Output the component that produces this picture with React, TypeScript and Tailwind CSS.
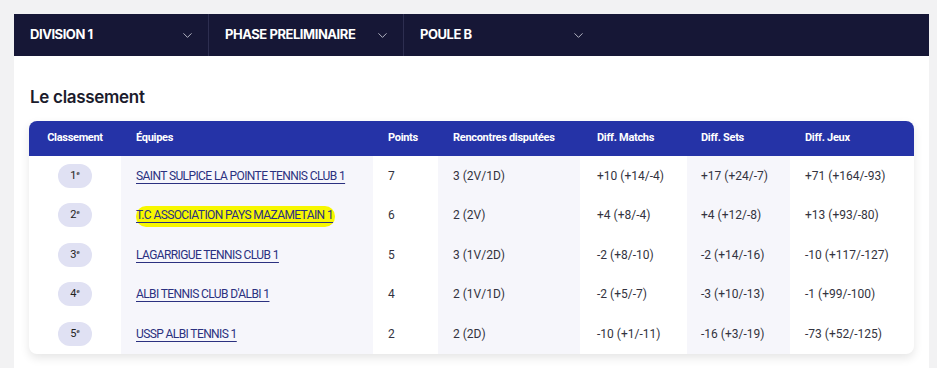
import { ChevronDown } from "lucide-react";

const rows = [
	{ rank: 1, team: "SAINT SULPICE LA POINTE TENNIS CLUB 1", pts: 7, played: "3 (2V/1D)", matchs: "+10 (+14/-4)", sets: "+17 (+24/-7)", jeux: "+71 (+164/-93)" },
	{ rank: 2, team: "T.C ASSOCIATION PAYS MAZAMETAIN 1", pts: 6, played: "2 (2V)", matchs: "+4 (+8/-4)", sets: "+4 (+12/-8)", jeux: "+13 (+93/-80)", mark: true },
	{ rank: 3, team: "LAGARRIGUE TENNIS CLUB 1", pts: 5, played: "3 (1V/2D)", matchs: "-2 (+8/-10)", sets: "-2 (+14/-16)", jeux: "-10 (+117/-127)" },
	{ rank: 4, team: "ALBI TENNIS CLUB D'ALBI 1", pts: 4, played: "2 (1V/1D)", matchs: "-2 (+5/-7)", sets: "-3 (+10/-13)", jeux: "-1 (+99/-100)" },
	{ rank: 5, team: "USSP ALBI TENNIS 1", pts: 2, played: "2 (2D)", matchs: "-10 (+1/-11)", sets: "-16 (+3/-19)", jeux: "-73 (+52/-125)" },
];

function Select({ label, last }: { label: string; last?: boolean }) {
	return (
		<div
			className={`flex h-full w-[195px] items-center justify-between pl-4 pr-[13px] ${last ? "" : "border-r border-[#2d2e50]"}`}
		>
			<span className="text-[13px] font-bold tracking-[-0.45px] text-white">{label}</span>
			<ChevronDown size={15} strokeWidth={1.4} className="text-[#c9cad6]" />
		</div>
	);
}

export default function App() {
	return (
		<div className="min-h-screen bg-[#f2f2f3] pl-[14px] pr-2 pt-[14px] font-['Inter',sans-serif]">
			<div className="flex h-[42px] bg-[#161736]">
				<Select label="DIVISION 1" />
				<Select label="PHASE PRELIMINAIRE" />
				<Select label="POULE B" last />
			</div>
			<div className="bg-white px-[15px] pb-4 pt-[30px]">
				<h2 className="pl-[1px] text-[17px] font-semibold leading-[22px] tracking-[-0.3px] text-[#1b1b2c]">Le classement</h2>
				<div className="mt-[13px] overflow-hidden rounded-lg bg-white shadow-[0_4px_10px_rgba(0,0,0,0.10)] font-['Roboto',sans-serif]">
					<table className="w-full table-fixed border-collapse text-left">
						<colgroup>
							<col className="w-[92px]" />
							<col className="w-[252px]" />
							<col className="w-[65px]" />
							<col className="w-[142px]" />
							<col className="w-[107px]" />
							<col className="w-[103px]" />
							<col />
						</colgroup>
						<thead>
							<tr className="h-[35px] bg-[#2533a7] text-[11px] font-bold tracking-[-0.3px] text-white">
								<th className="text-center font-bold">Classement</th>
								<th className="pl-[15px] font-bold">Équipes</th>
								<th className="pl-[15px] font-bold">Points</th>
								<th className="pl-[15px] font-bold">Rencontres disputées</th>
								<th className="pl-[17px] font-bold">Diff. Matchs</th>
								<th className="pl-[14px] font-bold">Diff. Sets</th>
								<th className="pl-[15px] font-bold">Diff. Jeux</th>
							</tr>
						</thead>
						<tbody className="text-[12px] text-[#333340]">
							{rows.map((r) => (
								<tr key={r.rank} className="h-[39.5px]">
									<td className="text-center">
										<span className="inline-flex h-6 w-[34px] items-center justify-center rounded-full bg-[#e0e1f3] text-[11px] text-[#222]">
											{r.rank}
											<sup className="text-[6px]">e</sup>
										</span>
									</td>
									<td className="bg-[#f6f6fb] pl-[15px]">
										<a
											href="#"
											className={`tracking-[-0.6px] text-[#2b3180] underline decoration-[#2b3180] underline-offset-[3px] ${r.mark ? "rounded-[10px] bg-[#f7f700] pb-[5px] pt-[2px] pr-[2px]" : ""}`}
										>
											{r.team}
										</a>
									</td>
									<td className="pl-[15px]">{r.pts}</td>
									<td className="bg-[#f6f6fb] pl-[15px]">{r.played}</td>
									<td className="pl-[17px]">{r.matchs}</td>
									<td className="bg-[#f6f6fb] pl-[14px]">{r.sets}</td>
									<td className="pl-[15px]">{r.jeux}</td>
								</tr>
							))}
						</tbody>
					</table>
				</div>
			</div>
		</div>
	);
}
